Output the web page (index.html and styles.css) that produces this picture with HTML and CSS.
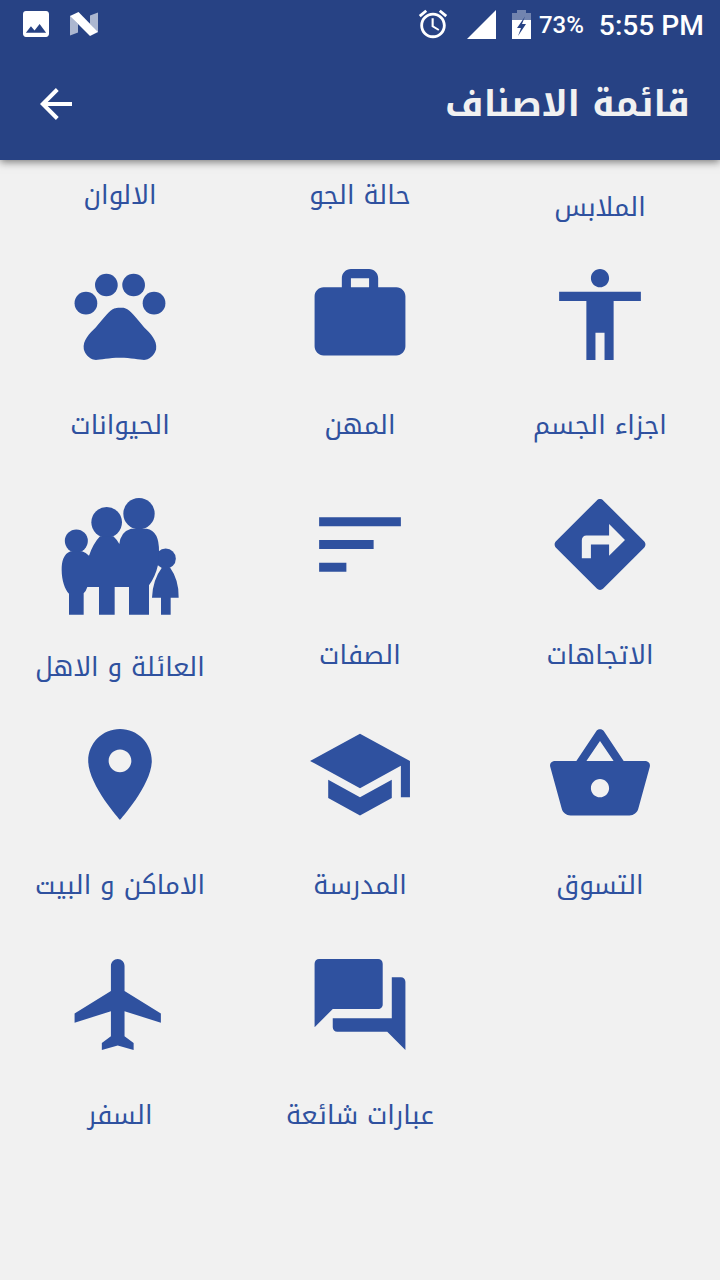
FILE: index.html
```html
<!DOCTYPE html>
<html lang="ar" dir="rtl">
<head>
    <meta charset="UTF-8">
    <meta name="viewport" content="width=device-width, initial-scale=1.0">
    <title>قائمة الاصناف</title>
    <link rel="stylesheet" href="styles.css">
</head>
<body>
    <header class="header">
        <div class="status-bar" dir="ltr">
            <div class="status-left">
                <svg class="photo-icon" viewBox="3 3 18 18"><path d="M21 19V5c0-1.100-.9-2-2-2H5c-1.100 0-2 .9-2 2v14c0 1.100.9 2 2 2h14c1.100 0 2-.9 2-2zM8.500 13.500l2.500 3.010L14.500 12l4.500 6H5l3.500-4.500z"/></svg>
                <svg class="n-icon" viewBox="0 0 28 24"><path opacity=".62" d="M0 3.500L8 12v8.500L0 23.500zM20 3.500L28 0.500v20L20 12z"/><path d="M0 4L8.500 0 28 20 20 24z"/></svg>
            </div>
            <div class="status-right">
                <svg class="alarm-icon" viewBox="0 0 24 24"><path d="M22 5.720l-4.600-3.860-1.290 1.530 4.600 3.860L22 5.720zM7.880 3.390L6.600 1.860 2 5.710l1.290 1.530 4.590-3.850zM12.500 8H11v6l4.750 2.850.75-1.230-4-2.370V8zM12 4c-4.970 0-9 4.030-9 9s4.020 9 9 9c4.970 0 9-4.030 9-9s-4.030-9-9-9zm0 16c-3.870 0-7-3.130-7-7s3.130-7 7-7 7 3.130 7 7-3.130 7-7 7z"/></svg>
                <svg class="signal-icon" viewBox="0 0 29 29"><path d="M29 0v29H0z"/></svg>
                <svg class="battery-icon" viewBox="0 0 19 29"><path opacity=".35" d="M5 0h9v3h5v7H0V3h5z"/><path d="M0 10h19v19H0z"/><path class="bolt" d="M13 6.500L5 18h4L6 26 14 14h-4z"/></svg>
                <span class="battery-level">73%</span>
                <span class="clock">5:55 PM</span>
            </div>
        </div>
        <div class="toolbar">
            <h1 class="title">قائمة الاصناف</h1>
            <svg class="back-icon" viewBox="0 0 32 32"><path d="M32 16H3M17.300 1.500L2.800 16l14.500 14.500"/></svg>
        </div>
    </header>

    <main class="categories">
        <!-- Top row, icons scrolled out of view -->
        <div class="category cut low"><span class="label">الملابس</span></div>
        <div class="category cut"><span class="label">حالة الجو</span></div>
        <div class="category cut"><span class="label">الالوان</span></div>

        <div class="category">
            <svg class="icon" viewBox="0 0 24 24"><path d="M12 2c1.100 0 2 .9 2 2s-.9 2-2 2-2-.9-2-2 .9-2 2-2zm9 7h-6v13h-2v-6h-2v6H9V9H3V7h18v2z"/></svg>
            <span class="label">اجزاء الجسم</span>
        </div>
        <div class="category">
            <svg class="icon" viewBox="0 0 24 24"><path fill-rule="evenodd" d="M20 6h-4V4c0-1.110-.89-2-2-2h-4c-1.110 0-2 .89-2 2v2H4c-1.110 0-2 .89-2 2v11c0 1.110.89 2 2 2h16c1.110 0 2-.89 2-2V8c0-1.110-.89-2-2-2zm-6 0h-4V4h4v2z"/></svg>
            <span class="label">المهن</span>
        </div>
        <div class="category">
            <svg class="icon" viewBox="0 0 24 24"><circle cx="4.500" cy="9.500" r="2.500"/><circle cx="9" cy="5.500" r="2.500"/><circle cx="15" cy="5.500" r="2.500"/><circle cx="19.500" cy="9.500" r="2.500"/><path d="M17.340 14.860c-.87-1.020-1.600-1.890-2.480-2.910-.46-.54-1.050-1.080-1.750-1.320-.11-.04-.22-.07-.33-.09-.25-.04-.52-.04-.78-.04s-.53 0-.79.05c-.11.020-.22.050-.33.090-.7.240-1.280.780-1.750 1.320-.87 1.020-1.600 1.890-2.480 2.910-1.310 1.310-2.920 2.760-2.620 4.790.29 1.020 1.020 2.030 2.330 2.320.73.150 3.060-.44 5.540-.44h.18c2.480 0 4.810.58 5.540.44 1.310-.29 2.040-1.310 2.330-2.320.31-2.040-1.300-3.490-2.610-4.800z"/></svg>
            <span class="label">الحيوانات</span>
        </div>

        <div class="category">
            <svg class="icon" viewBox="0 0 24 24"><path fill-rule="evenodd" d="M21.710 11.290l-9-9c-.39-.39-1.020-.39-1.410 0l-9 9c-.39.39-.39 1.020 0 1.410l9 9c.39.39 1.020.39 1.410 0l9-9c.39-.38.39-1.010 0-1.410zM14 14.500V12h-4v3H8v-4c0-.55.45-1 1-1h5V7.500l3.500 3.500-3.500 3.500z"/></svg>
            <span class="label">الاتجاهات</span>
        </div>
        <div class="category">
            <svg class="icon" viewBox="0 0 24 24"><path d="M3 18h6v-2H3v2zM3 6v2h18V6H3zm0 7h12v-2H3v2z"/></svg>
            <span class="label">الصفات</span>
        </div>
        <div class="category">
            <svg class="icon family" viewBox="168 30 384 384">
                <circle cx="229" cy="183" r="34.500"/>
                <circle cx="320" cy="127" r="46"/>
                <circle cx="417" cy="101" r="47"/>
                <circle cx="497" cy="236" r="30.500"/>
                <path d="M212 214C190 222 185 245 185 270C185 300 195 330 207 341V404H251V340Q258 334 262 321H297V404H344V321H387V404H447V316Q466 290 474 255L477 215Q478 152 440 146H393Q362 155 358 192Q350 178 340 169H300Q280 190 267 227Q258 218 246 214Z"/>
                <path d="M485 264H511Q537 300 536 353H512V404H483V353H456Q458 300 485 264Z"/>
            </svg>
            <span class="label">العائلة و الاهل</span>
        </div>

        <div class="category">
            <svg class="icon" viewBox="0 0 24 24"><path fill-rule="evenodd" d="M17.210 9l-4.380-6.560c-.19-.28-.51-.42-.83-.42-.32 0-.64.14-.83.430L6.790 9H2c-.55 0-1 .45-1 1 0 .09.010.18.040.27l2.540 9.270c.23.84 1 1.460 1.920 1.460h13c.92 0 1.690-.62 1.930-1.460l2.540-9.270L23 10c0-.55-.45-1-1-1h-4.790zM9 9l3-4.400L15 9H9zm3 8c-1.100 0-2-.9-2-2s.9-2 2-2 2 .9 2 2-.9 2-2 2z"/></svg>
            <span class="label">التسوق</span>
        </div>
        <div class="category">
            <svg class="icon" viewBox="0 0 24 24"><path d="M5 13.180v4L12 21l7-3.820v-4L12 17l-7-3.820zM12 3L1 9l11 6 9-4.910V17h2V9L12 3z"/></svg>
            <span class="label">المدرسة</span>
        </div>
        <div class="category">
            <svg class="icon" viewBox="0 0 24 24"><path fill-rule="evenodd" d="M12 2C8.130 2 5 5.130 5 9c0 5.250 7 13 7 13s7-7.750 7-13c0-3.870-3.130-7-7-7zm0 9.500c-1.380 0-2.500-1.120-2.500-2.500s1.120-2.500 2.500-2.500 2.500 1.120 2.500 2.500-1.120 2.500-2.500 2.500z"/></svg>
            <span class="label">الاماكن و البيت</span>
        </div>

        <div class="category last-row">
            <svg class="icon" viewBox="0 0 24 24"><path d="M21 6h-2v9H6v2c0 .55.45 1 1 1h11l4 4V7c0-.55-.45-1-1-1zm-4 6V3c0-.55-.45-1-1-1H3c-.55 0-1 .45-1 1v14l4-4h10c.55 0 1-.45 1-1z"/></svg>
            <span class="label">عبارات شائعة</span>
        </div>
        <div class="category">
            <svg class="icon" viewBox="0 0 24 24"><path d="M21 16v-2l-8-5V3.500c0-.83-.67-1.500-1.500-1.500S10 2.670 10 3.500V9l-8 5v2l8-2.500V19l-2 1.500V22l3.500-1 3.500 1v-1.500L13 19v-5.500l8 2.500z"/></svg>
            <span class="label">السفر</span>
        </div>
    </main>
</body>
</html>
```
FILE: styles.css
```css
* {
    box-sizing: border-box;
}

body {
    margin: 0;
    height: 1280px;
    overflow: hidden;
    background-color: #f1f1f1;
    font-family: "Noto Kufi Arabic", "Noto Sans Arabic", "Noto Sans", "DejaVu Sans", sans-serif;
}

svg {
    display: block;
    flex-shrink: 0;
}

.header {
    height: 160px;
    background-color: #274284;
    box-shadow: 0 2px 8px rgba(0, 0, 0, 0.5);
}

.status-bar {
    display: flex;
    justify-content: space-between;
    height: 48px;
    padding: 0 16px 0 23px;
    color: #fff;
    font-family: Roboto, sans-serif;
    font-weight: 500;
}

.status-bar svg {
    fill: #fff;
}

.status-left,
.status-right {
    display: flex;
    align-items: center;
}

.photo-icon {
    width: 26px;
    height: 26px;
    margin-right: 21px;
}

.n-icon {
    width: 28px;
    height: 24px;
}

.alarm-icon {
    width: 34px;
    height: 34px;
    margin-right: 17px;
}

.signal-icon {
    width: 29px;
    height: 29px;
    margin-right: 16px;
}

.battery-icon {
    width: 19px;
    height: 29px;
    margin-right: 8px;
}

.status-bar .bolt {
    fill: #274284;
}

.battery-level {
    padding-top: 2px;
    font-size: 24px;
    margin-right: 15px;
}

.clock {
    padding-top: 3px;
    font-size: 28.2px;
}

.toolbar {
    display: flex;
    justify-content: space-between;
    align-items: center;
    height: 112px;
    padding: 0 30px 0 40px;
}

.title {
    margin: 0;
    color: #f1f1f1;
    font-size: 35.9px;
    font-weight: bold;
    line-height: 60px;
}

.back-icon {
    width: 32px;
    height: 32px;
    fill: none;
    stroke: #fff;
    stroke-width: 4;
}

.categories {
    display: grid;
    grid-template-columns: repeat(3, 240px);
    grid-template-rows: 100px repeat(4, 230px);
}

.category {
    display: flex;
    flex-direction: column;
    align-items: center;
}

.category.cut {
    padding-top: 16px;
}

.category.low {
    padding-top: 28px;
}

.icon {
    width: 110px;
    height: 109px;
    margin-bottom: 37px;
    fill: #2f519f;
}

.family {
    width: 128px;
    height: 128px;
    margin-bottom: 30px;
}

.label {
    color: #2f519f;
    font-size: 26.1px;
    line-height: 40px;
    white-space: nowrap;
}

.last-row {
    grid-column: 2;
}
```
